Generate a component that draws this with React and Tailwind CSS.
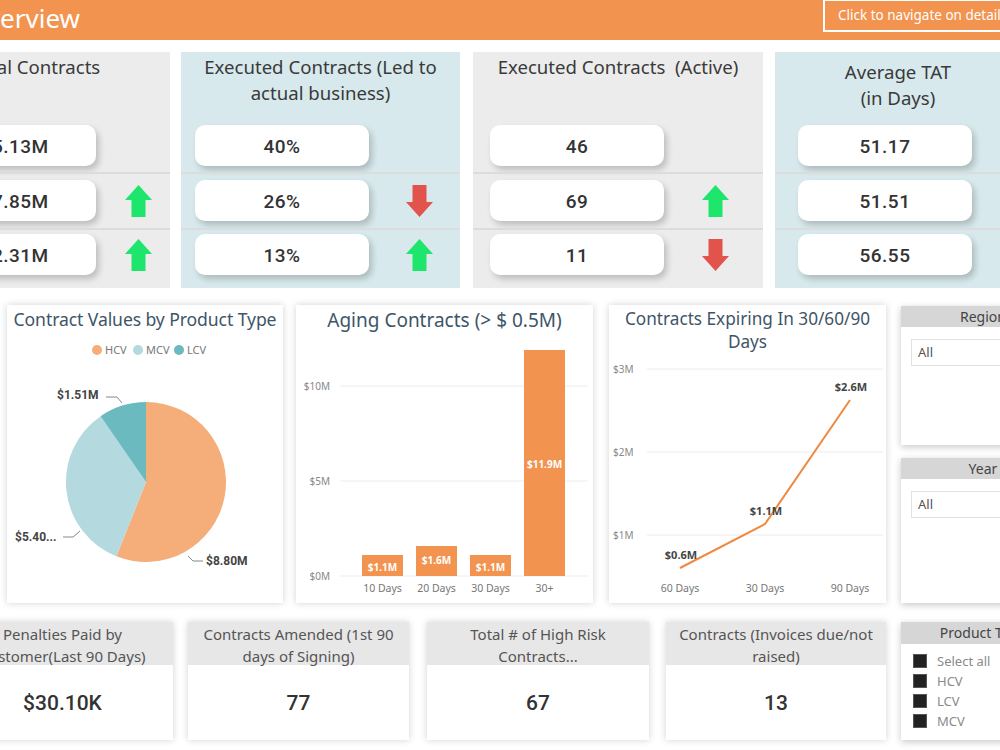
import React from 'react';

const SANS = "font-['Noto_Sans',sans-serif]";
const NUM = "font-['Roboto',sans-serif]";

function Arrow({ dir }) {
  if (dir === 'up') {
    return (
      <svg width="27" height="32" viewBox="0 0 27 32">
        <polygon points="13.5,0 27,15 20.5,15 20.5,32 6.5,32 6.5,15 0,15" fill="#1ee56b" />
      </svg>
    );
  }
  return (
    <svg width="27" height="32" viewBox="0 0 27 32">
      <polygon points="6.5,0 20.5,0 20.5,17 27,17 13.5,32 0,17 6.5,17" fill="#e2544b" />
    </svg>
  );
}

function KpiRow({ value, arrow, rowClass, padClass, arrowClass }) {
  return (
    <div className={`flex items-start ${rowClass}`}>
      <div className={padClass} />
      <div className={`w-[174px] h-[41px] pt-[3px] rounded-[10px] bg-white shadow-[3px_4px_6px_rgba(0,0,0,0.2)] flex items-center justify-center ${NUM} font-medium text-[19px] text-[#333] tracking-wide`}>
        {value}
      </div>
      {arrow && (
        <div className={`h-[41px] flex items-center ${arrowClass}`}>
          <Arrow dir={arrow} />
        </div>
      )}
    </div>
  );
}

function KpiPanel({ boxClass, titleClass, title, padClass, arrowClass, rows }) {
  return (
    <div className={`flex flex-col shrink-0 h-[236px] ${boxClass}`}>
      <div className={`h-[73px] pt-[2px] text-center text-[18.6px] leading-[26px] text-[#3a3a3a] ${SANS} ${titleClass}`}>
        {title.map((t, i) => (
          <div key={i} className="whitespace-pre">{t}</div>
        ))}
      </div>
      <KpiRow value={rows[0][0]} arrow={rows[0][1]} rowClass="h-[47px]" padClass={padClass} arrowClass={arrowClass} />
      <div className="h-[2px] bg-[#dcdcdc]" />
      <KpiRow value={rows[1][0]} arrow={rows[1][1]} rowClass="h-[54px] pt-[6px]" padClass={padClass} arrowClass={arrowClass} />
      <div className="h-[2px] bg-[#dcdcdc]" />
      <KpiRow value={rows[2][0]} arrow={rows[2][1]} rowClass="h-[58px] pt-[4px]" padClass={padClass} arrowClass={arrowClass} />
    </div>
  );
}

function ChartTitle({ lines, cls }) {
  return (
    <div className={`text-center text-[#3e5568] ${SANS} ${cls}`}>
      {lines.map((l, i) => (
        <div key={i}>{l}</div>
      ))}
    </div>
  );
}

function PieCard() {
  const cx = 139, cy = 147, r = 80;
  const pt = (deg) => {
    const a = (deg * Math.PI) / 180;
    return [cx + r * Math.sin(a), cy - r * Math.cos(a)];
  };
  const slice = (a0, a1) => {
    const [x0, y0] = pt(a0);
    const [x1, y1] = pt(a1);
    const large = a1 - a0 > 180 ? 1 : 0;
    return `M${cx},${cy} L${x0},${y0} A${r},${r} 0 ${large} 1 ${x1},${y1} Z`;
  };
  return (
    <div className="w-[276px] h-[298px] shrink-0 bg-white shadow-[0_0_7px_rgba(0,0,0,0.18)] flex flex-col">
      <ChartTitle lines={['Contract Values by Product Type']} cls="h-[30px] pt-[2px] text-[17.6px] leading-[24px] tracking-[-0.1px] whitespace-nowrap" />
      <svg width="276" height="268" className={SANS}>
        <g fontSize="11" fill="#777">
          <circle cx="90" cy="15" r="5" fill="#f5ae79" />
          <text x="98" y="19">HCV</text>
          <circle cx="131" cy="15" r="5" fill="#b4d9de" />
          <text x="139" y="19">MCV</text>
          <circle cx="172" cy="15" r="5" fill="#6bbabf" />
          <text x="180" y="19">LCV</text>
        </g>
        <path d={slice(0, 201.7)} fill="#f5ae79" />
        <path d={slice(201.7, 325.4)} fill="#b4d9de" />
        <path d={slice(325.4, 360)} fill="#6bbabf" />
        <g stroke="#888" strokeWidth="1" fill="none">
          <polyline points="99,62 110,62 115,68" />
          <polyline points="56,202 66,202 73,196" />
          <polyline points="181,221 186,226 196,226" />
        </g>
        <g fontSize="12" fontWeight="700" fill="#444" className={NUM}>
          <text x="50" y="64">$1.51M</text>
          <text x="8" y="206">$5.40...</text>
          <text x="199" y="230">$8.80M</text>
        </g>
      </svg>
    </div>
  );
}

function BarCard() {
  const bars = [
    { x: 66, top: 220, label: '$1.1M', cat: '10 Days', ly: 236 },
    { x: 120, top: 211, label: '$1.6M', cat: '20 Days', ly: 229 },
    { x: 174, top: 220, label: '$1.1M', cat: '30 Days', ly: 236 },
    { x: 228, top: 15, label: '$11.9M', cat: '30+', ly: 133 },
  ];
  return (
    <div className="w-[297px] h-[298px] shrink-0 bg-white shadow-[0_0_7px_rgba(0,0,0,0.18)] flex flex-col">
      <ChartTitle lines={['Aging Contracts (> $ 0.5M)']} cls="h-[30px] pt-[1px] text-[19px] leading-[28px]" />
      <svg width="297" height="268" className={SANS}>
        <g stroke="#ececec" strokeWidth="1">
          <line x1="44" y1="51" x2="292" y2="51" />
          <line x1="44" y1="146" x2="292" y2="146" />
          <line x1="44" y1="241" x2="292" y2="241" />
        </g>
        <g fontSize="10" fill="#888" textAnchor="end">
          <text x="34" y="55">$10M</text>
          <text x="34" y="150">$5M</text>
          <text x="34" y="245">$0M</text>
        </g>
        {bars.map((b, i) => (
          <g key={i}>
            <rect x={b.x} y={b.top} width="41" height={241 - b.top} fill="#f2944f" />
            <text x={b.x + 20.5} y={b.ly} fontSize="10" fontWeight="700" fill="#fff" textAnchor="middle">{b.label}</text>
            <text x={b.x + 20.5} y="257" fontSize="10.5" fill="#777" textAnchor="middle">{b.cat}</text>
          </g>
        ))}
      </svg>
    </div>
  );
}

function LineCard() {
  const pts = [
    { x: 71, y: 213, label: '$0.6M', cat: '60 Days' },
    { x: 156, y: 169, label: '$1.1M', cat: '30 Days' },
    { x: 241, y: 45, label: '$2.6M', cat: '90 Days' },
  ];
  return (
    <div className="w-[277px] h-[298px] shrink-0 bg-white shadow-[0_0_7px_rgba(0,0,0,0.18)] flex flex-col">
      <ChartTitle lines={['Contracts Expiring In 30/60/90', 'Days']} cls="h-[50px] pt-[2px] text-[17.2px] leading-[23px]" />
      <svg width="277" height="248" className={SANS}>
        <g stroke="#ececec" strokeWidth="1">
          <line x1="38" y1="14" x2="274" y2="14" />
          <line x1="38" y1="97" x2="274" y2="97" />
          <line x1="38" y1="180" x2="274" y2="180" />
        </g>
        <g fontSize="10" fill="#888">
          <text x="4" y="18">$3M</text>
          <text x="4" y="101">$2M</text>
          <text x="4" y="184">$1M</text>
        </g>
        <polyline points={pts.map((p) => `${p.x},${p.y}`).join(' ')} fill="none" stroke="#f0883e" strokeWidth="2" />
        {pts.map((p, i) => (
          <g key={i}>
            <text x={p.x + 1} y={p.y - 9} fontSize="11" fontWeight="700" fill="#444" textAnchor="middle">{p.label}</text>
            <text x={p.x} y="237" fontSize="10.5" fill="#777" textAnchor="middle">{p.cat}</text>
          </g>
        ))}
      </svg>
    </div>
  );
}

function Slicer({ title, boxClass }) {
  return (
    <div className={`w-[164px] bg-white shadow-[0_2px_7px_rgba(0,0,0,0.22)] flex flex-col ${boxClass}`}>
      <div className={`h-[21px] bg-[#d6d6d6] text-center text-[14px] leading-[21px] text-[#444] ${SANS}`}>{title}</div>
      <div className="pt-[12px] pl-[10px]">
        <div className={`h-[27px] border border-[#e2e2e2] bg-white pl-[6px] text-[13px] leading-[25px] text-[#555] ${SANS}`}>All</div>
      </div>
    </div>
  );
}

function StatCard({ lines, value, boxClass }) {
  return (
    <div className={`h-[118px] shrink-0 bg-white shadow-[0_0_7px_rgba(0,0,0,0.18)] flex flex-col ${boxClass}`}>
      <div className={`h-[43px] bg-[#e7e7e7] text-center text-[15px] leading-[22px] text-[#555] pt-[1px] ${SANS}`}>
        {lines.map((l, i) => (
          <div key={i} className="whitespace-nowrap">{l}</div>
        ))}
      </div>
      <div className={`flex-1 pt-[3px] flex items-center justify-center ${NUM} font-medium text-[21px] text-[#333]`}>{value}</div>
    </div>
  );
}

export default function App() {
  return (
    <div className="w-[1000px] h-[750px] overflow-hidden bg-white">
      <div className="-ml-[120px] w-[1200px]">
        {/* header */}
        <div className="h-[40px] bg-[#f2934f] flex">
          <div className={`w-[200px] h-[36px] shrink-0 flex justify-end items-center text-[26px] text-white whitespace-nowrap ${SANS}`}>
            Contract Overview
          </div>
          <div className={`ml-auto mr-[57px] -mt-[1px] w-[200px] h-[33px] border-2 border-white pl-[13px] text-[13.5px] leading-[29px] text-white whitespace-nowrap ${SANS}`}>
            Click to navigate on details
          </div>
        </div>

        {/* KPI strip */}
        <div className="mt-[12px] flex">
          <KpiPanel
            boxClass="w-[290px] bg-[#ececec]"
            titleClass="pl-[20px]"
            title={['Total Contracts']}
            padClass="w-[42px] shrink-0"
            arrowClass="ml-[29px]"
            rows={[['$15.13M'], ['$17.85M', 'up'], ['$12.31M', 'up']]}
          />
          <KpiPanel
            boxClass="ml-[11px] w-[279px] bg-[#d7e9ec]"
            titleClass=""
            title={['Executed Contracts (Led to', 'actual business)']}
            padClass="w-[14px] shrink-0"
            arrowClass="ml-[37px]"
            rows={[['40%'], ['26%', 'down'], ['13%', 'up']]}
          />
          <KpiPanel
            boxClass="ml-[13px] w-[290px] bg-[#ececec]"
            titleClass=""
            title={['Executed Contracts  (Active)']}
            padClass="w-[17px] shrink-0"
            arrowClass="ml-[38px]"
            rows={[['46'], ['69', 'up'], ['11', 'down']]}
          />
          <KpiPanel
            boxClass="ml-[12px] w-[246px] bg-[#d7e9ec]"
            titleClass="pt-[7px]"
            title={['Average TAT', '(in Days)']}
            padClass="w-[23px] shrink-0"
            arrowClass=""
            rows={[['51.17'], ['51.51'], ['56.55']]}
          />
        </div>

        {/* charts */}
        <div className="mt-[17px] ml-[127px] flex items-start">
          <PieCard />
          <div className="ml-[13px]"><BarCard /></div>
          <div className="ml-[16px]"><LineCard /></div>
          <div className="ml-[15px] flex flex-col">
            <Slicer title="Region" boxClass="h-[139px] mt-[1px]" />
            <Slicer title="Year" boxClass="h-[145px] mt-[13px]" />
          </div>
        </div>

        {/* bottom stats */}
        <div className="mt-[19px] ml-[72px] flex items-start">
          <StatCard boxClass="w-[221px]" lines={['Penalties Paid by', 'Customer(Last 90 Days)']} value="$30.10K" />
          <StatCard boxClass="ml-[15px] w-[221px]" lines={['Contracts Amended (1st 90', 'days of Signing)']} value="77" />
          <StatCard boxClass="ml-[18px] w-[222px]" lines={['Total # of High Risk', 'Contracts...']} value="67" />
          <StatCard boxClass="ml-[17px] w-[220px]" lines={['Contracts (Invoices due/not', 'raised)']} value="13" />
          <div className="ml-[15px] w-[164px] h-[118px] bg-white shadow-[0_2px_7px_rgba(0,0,0,0.22)] flex flex-col">
            <div className={`h-[22px] bg-[#d6d6d6] text-center text-[14px] leading-[22px] text-[#444] ${SANS}`}>Product Type</div>
            <div className="pt-[10px] pl-[12px] flex flex-col gap-[6px]">
              {['Select all', 'HCV', 'LCV', 'MCV'].map((t) => (
                <div key={t} className="flex items-center h-[14px]">
                  <div className="w-[14px] h-[14px] bg-[#222] border border-[#555]" />
                  <span className={`ml-[10px] text-[13px] leading-[14px] text-[#8a8a8a] ${SANS}`}>{t}</span>
                </div>
              ))}
            </div>
          </div>
        </div>
      </div>
    </div>
  );
}
